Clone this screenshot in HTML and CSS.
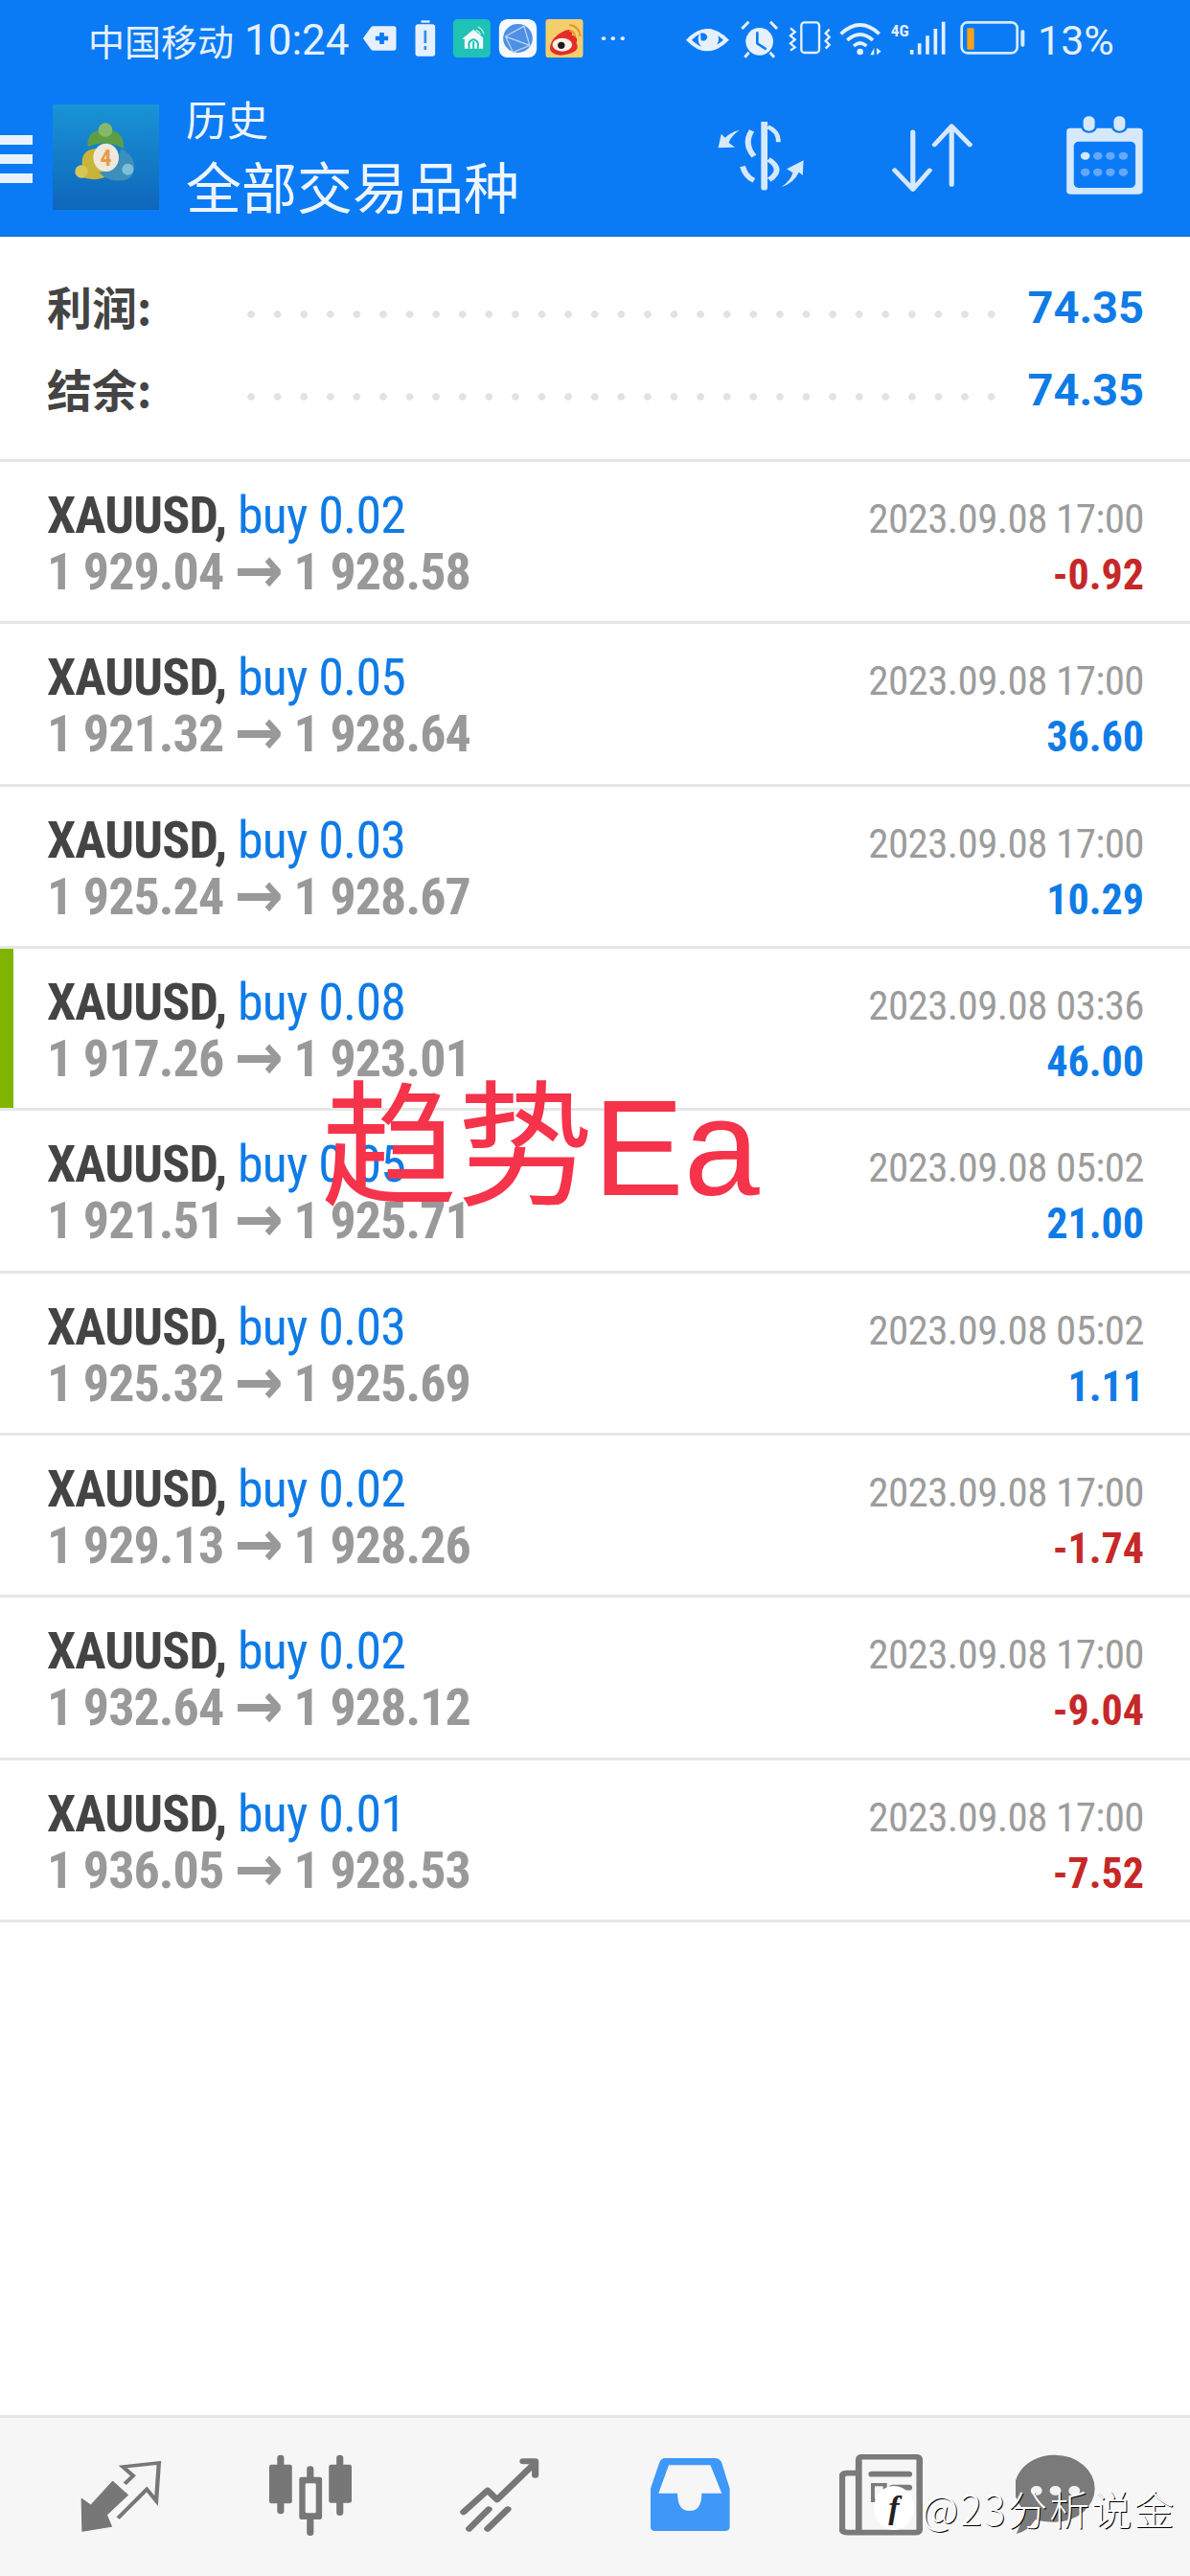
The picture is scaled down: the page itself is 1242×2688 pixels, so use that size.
FILE: index.html
```html
<!DOCTYPE html>
<html lang="zh">
<head>
<meta charset="utf-8">
<title>历史</title>
<link rel="stylesheet" href="styles.css">
</head>
<body>
<div class="screen">
<header class="header">
  <div class="status">
    <span class="carrier">中国移动</span>
    <span class="clock">10:24</span>
    <svg class="st-left" width="231" height="44" viewBox="24 24 692 132">
      <path d="M26 90 L52 54 Q54 52 58 52 H122 Q130 52 130 60 V120 Q130 128 122 128 H58 Q54 128 52 126Z" fill="#e6f0fc"/>
      <path d="M85 72 V108 M65 90 H105" stroke="#0a7bf5" stroke-width="14"/>
      <rect x="190" y="46" width="62" height="100" rx="9" fill="#e6f0fc"/>
      <rect x="208" y="34" width="27" height="7" fill="#e6f0fc"/>
      <path d="M221 65 V105 M221 114 V126" stroke="#2f8ff0" stroke-width="8"/>
      <rect x="308" y="30" width="117" height="120" rx="14" fill="#1fc2b4"/>
      <path d="M336 92 L372 62 L402 88 V122 H344 V92Z" fill="#f2fbfa"/>
      <path d="M358 122 V104 Q372 84 386 104 V122 M372 100 V122" fill="none" stroke="#1fc2b4" stroke-width="6"/>
      <path d="M386 54 Q400 60 404 76 M380 64 Q390 68 394 78" fill="none" stroke="#cfeeea" stroke-width="4"/>
      <rect x="452" y="30" width="118" height="120" rx="26" fill="#f6f9fe"/>
      <ellipse cx="511" cy="90" rx="46" ry="45" fill="#4f8fe4"/>
      <path d="M472 84 L530 52 L548 112 L496 134Z M472 84 L548 112" fill="none" stroke="#b8d3f4" stroke-width="4"/>
      <rect x="598" y="30" width="117" height="120" rx="10" fill="#f5ce6c"/>
      <path d="M612 118 Q615 85 660 65 Q685 58 680 80 Q702 84 694 104 Q706 124 680 136 Q640 150 620 136 Q610 128 612 118Z" fill="#e22d28"/>
      <ellipse cx="650" cy="110" rx="31" ry="21" fill="#fbf1e6"/>
      <circle cx="647" cy="112" r="11" fill="#1c1c1c"/>
      <path d="M672 48 Q704 52 706 84 M672 66 Q688 68 690 84" fill="none" stroke="#e9932f" stroke-width="6"/>
    </svg>
    <span class="more">···</span>
    <svg class="st-right" width="354" height="44" viewBox="45 24 1062 132">
      <path d="M45 95 Q110 25 180 95 Q110 165 45 95Z" fill="#e6f0fc"/>
      <path d="M63 95 Q110 48 162 95 Q110 142 63 95Z" fill="#0a7bf5"/>
      <circle cx="115" cy="92" r="32" fill="#e6f0fc"/>
      <path d="M90 74 Q108 70 112 86 Q106 102 92 96Z" fill="#0a7bf5"/>
      <circle cx="275" cy="100" r="43" fill="#e6f0fc"/>
      <path d="M220 60 L241 38 M330 60 L309 38 M242 134 L229 149 M308 134 L321 149" stroke="#e6f0fc" stroke-width="9"/>
      <path d="M268 70 V106 L296 124" fill="none" stroke="#0a7bf5" stroke-width="8"/>
      <rect x="406" y="40" width="56" height="95" rx="10" fill="none" stroke="#e6f0fc" stroke-width="7"/>
      <path d="M372 58 L386 70 L372 82 L386 94 L372 106 L386 118 L372 128 M494 62 L482 74 L494 86 L482 98 L494 110 L482 122" fill="none" stroke="#e6f0fc" stroke-width="7"/>
      <path d="M530 76 Q590 20 650 76 M550 96 Q590 60 630 96 M570 114 Q590 96 610 114" fill="none" stroke="#e6f0fc" stroke-width="11"/>
      <circle cx="590" cy="132" r="10" fill="#e6f0fc"/>
      <path d="M622 142 L634 120 V142Z M642 120 L656 131 L642 142Z" fill="#e6f0fc"/>
      <text x="686" y="84" class="st-4g">4G</text>
      <path d="M752 126 V140 M776 106 V140 M801 82 V140 M826 60 V140 M851 38 V140" stroke="#e6f0fc" stroke-width="11"/>
      <rect x="908" y="40" width="174" height="96" rx="18" fill="none" stroke="#d5eafc" stroke-width="8"/>
      <rect x="925" y="58" width="22" height="67" rx="4" fill="#f7a11a"/>
      <rect x="1093" y="64" width="12" height="52" rx="5" fill="#d5eafc"/>
    </svg>
    <span class="percent">13%</span>
  </div>
  <div class="toolbar">
    <div class="burger"><span></span><span></span><span></span></div>
    <svg class="logo" width="111" height="110" viewBox="15 12 333 330">
      <defs>
        <linearGradient id="lg" x1="0" y1="0" x2="0" y2="1"><stop offset="0" stop-color="#1a93d6"/><stop offset="1" stop-color="#0e66bb"/></linearGradient>
      </defs>
      <rect x="15" y="12" width="333" height="330" fill="url(#lg)"/>
      <path d="M125 145 Q120 102 160 92 L200 92 Q240 105 237 150 Q180 120 125 145Z" fill="#5d9e45"/>
      <path d="M150 150 Q100 155 108 205 L105 240 Q160 255 185 235 Q150 200 150 150Z" fill="#c9b43a"/>
      <path d="M230 150 Q275 175 270 215 Q265 250 225 250 Q190 255 160 225 Q210 220 230 150Z" fill="#3d8fbb"/>
      <circle cx="180" cy="92" r="22" fill="#86b86b"/>
      <circle cx="105" cy="222" r="20" fill="#d5c65a"/>
      <circle cx="250" cy="215" r="18" fill="#7cc0d8"/>
      <ellipse cx="182" cy="178" rx="40" ry="44" fill="#efe8dc"/>
      <text x="182" y="204" class="logo-4">4</text>
    </svg>
    <div class="titles">
      <div class="title-sm">历史</div>
      <div class="title-lg">全部交易品种</div>
    </div>
    <div class="actions">
      <svg width="93" height="72" viewBox="320 382 234 216" preserveAspectRatio="none">
        <g fill="none" stroke="#d6e8fc">
          <path d="M445 386 V588" stroke-width="17" stroke-linecap="round"/>
          <path d="M454 398 Q482 410 482 446" stroke-width="12"/>
          <path d="M412 410 Q390 450 418 490" stroke-width="15"/>
          <path d="M456 500 Q498 532 458 564" stroke-width="15"/>
          <path d="M388 522 Q396 555 418 566" stroke-width="15"/>
        </g>
        <path d="M380 408 Q355 430 352 448 L368 462 L324 464 L332 420 L342 432 Q358 414 380 408Z" fill="#d6e8fc"/>
        <path d="M490 586 Q515 566 520 542 L504 530 L548 503 L546 550 L536 540 Q522 575 490 586Z" fill="#d6e8fc"/>
      </svg>
      <svg width="88" height="74" viewBox="778 378 222 222" preserveAspectRatio="none">
        <path d="M838 410 V585 M790 530 L838 590 L882 530 M940 575 V392 M895 450 L940 392 L988 450" fill="none" stroke="#d6e8fc" stroke-width="13" stroke-linecap="round" stroke-linejoin="round"/>
      </svg>
      <svg class="cal" width="81" height="84" viewBox="1240 362 204 252" preserveAspectRatio="none">
        <rect x="1243" y="403" width="200" height="207" rx="10" fill="#d6e8fc"/>
        <rect x="1262" y="445" width="162" height="145" rx="14" fill="#0a7bf5"/>
        <rect x="1281" y="360" width="42" height="58" rx="20" fill="#0a7bf5"/>
        <rect x="1361" y="360" width="42" height="58" rx="20" fill="#0a7bf5"/>
        <rect x="1287" y="366" width="30" height="46" rx="15" fill="#d6e8fc"/>
        <rect x="1367" y="366" width="30" height="46" rx="15" fill="#d6e8fc"/>
        <g fill="#64a8f8">
          <circle cx="1292" cy="490" r="12" fill="#d6e8fc"/><circle cx="1325" cy="490" r="12"/><circle cx="1358" cy="490" r="12"/><circle cx="1392" cy="490" r="12"/>
          <circle cx="1292" cy="541" r="12"/><circle cx="1325" cy="541" r="12"/><circle cx="1358" cy="541" r="12"/><circle cx="1392" cy="541" r="12"/>
        </g>
      </svg>
    </div>
  </div>
</header>

<main class="content">
  <section class="summary">
    <div class="sum-row"><span class="sum-label">利润:</span><span class="dots"></span><span class="sum-value">74.35</span></div>
    <div class="sum-row"><span class="sum-label">结余:</span><span class="dots"></span><span class="sum-value">74.35</span></div>
  </section>
  <ul class="trades">
    <li class="trade"><div class="t-title">XAUUSD, <span class="buy">buy 0.02</span></div><div class="t-date">2023.09.08 17:00</div><div class="t-price">1 929.04 <span class="arrow">→</span> 1 928.58</div><div class="t-pl loss">-0.92</div></li>
    <li class="trade"><div class="t-title">XAUUSD, <span class="buy">buy 0.05</span></div><div class="t-date">2023.09.08 17:00</div><div class="t-price">1 921.32 <span class="arrow">→</span> 1 928.64</div><div class="t-pl gain">36.60</div></li>
    <li class="trade"><div class="t-title">XAUUSD, <span class="buy">buy 0.03</span></div><div class="t-date">2023.09.08 17:00</div><div class="t-price">1 925.24 <span class="arrow">→</span> 1 928.67</div><div class="t-pl gain">10.29</div></li>
    <li class="trade selected"><div class="t-title">XAUUSD, <span class="buy">buy 0.08</span></div><div class="t-date">2023.09.08 03:36</div><div class="t-price">1 917.26 <span class="arrow">→</span> 1 923.01</div><div class="t-pl gain">46.00</div></li>
    <li class="trade"><div class="t-title">XAUUSD, <span class="buy">buy 0.05</span></div><div class="t-date">2023.09.08 05:02</div><div class="t-price">1 921.51 <span class="arrow">→</span> 1 925.71</div><div class="t-pl gain">21.00</div></li>
    <li class="trade"><div class="t-title">XAUUSD, <span class="buy">buy 0.03</span></div><div class="t-date">2023.09.08 05:02</div><div class="t-price">1 925.32 <span class="arrow">→</span> 1 925.69</div><div class="t-pl gain">1.11</div></li>
    <li class="trade"><div class="t-title">XAUUSD, <span class="buy">buy 0.02</span></div><div class="t-date">2023.09.08 17:00</div><div class="t-price">1 929.13 <span class="arrow">→</span> 1 928.26</div><div class="t-pl loss">-1.74</div></li>
    <li class="trade"><div class="t-title">XAUUSD, <span class="buy">buy 0.02</span></div><div class="t-date">2023.09.08 17:00</div><div class="t-price">1 932.64 <span class="arrow">→</span> 1 928.12</div><div class="t-pl loss">-9.04</div></li>
    <li class="trade"><div class="t-title">XAUUSD, <span class="buy">buy 0.01</span></div><div class="t-date">2023.09.08 17:00</div><div class="t-price">1 936.05 <span class="arrow">→</span> 1 928.53</div><div class="t-pl loss">-7.52</div></li>
  </ul>
</main>

<nav class="tabbar">
  <svg class="tab tab-trade" width="85" height="75" viewBox="213 204 215 224" preserveAspectRatio="none">
    <path d="M298 268 L338 310 L282 372 L295 408 L218 423 L216 322 L240 342Z" fill="#777" stroke="#777" stroke-width="3" stroke-linejoin="round"/>
    <path d="M330 275 L352 250 L325 222 L420 210 L413 328 L388 292 L312 382" fill="none" stroke="#777" stroke-width="11"/>
  </svg>
  <svg class="tab tab-chart" width="88" height="86" viewBox="709 184 222 258" preserveAspectRatio="none">
    <g stroke="#777" stroke-width="18" stroke-linecap="round">
      <path d="M739 195 V362 M817 230 V430 M895 195 V367"/>
    </g>
    <rect x="709" y="216" width="60" height="122" rx="6" fill="#777"/>
    <rect x="788" y="255" width="60" height="133" rx="6" fill="#777"/>
    <rect x="804" y="275" width="28" height="93" rx="4" fill="#f6f6f6"/>
    <rect x="866" y="216" width="60" height="120" rx="6" fill="#777"/>
  </svg>
  <svg class="tab tab-line" width="86" height="78" viewBox="1210 195 216 234" preserveAspectRatio="none">
    <path d="M1222 364 L1285 296 L1310 325 L1405 215 M1378 205 H1410 V248 M1237 416 L1288 355 M1285 416 L1338 355" fill="none" stroke="#777" stroke-width="18" stroke-linecap="round" stroke-linejoin="round"/>
  </svg>
  <svg class="tab tab-inbox" width="83" height="78" viewBox="147 195 210 234" preserveAspectRatio="none">
    <path d="M185 195 H315 Q330 195 335 210 L356 290 V410 Q356 423 343 423 H160 Q147 423 147 410 V290 L170 210 Q175 195 185 195Z" fill="#3d98f7"/>
    <path d="M195 217 H305 L335 305 H282 Q282 360 250 360 Q218 360 218 305 H168Z" fill="#f6f6f6"/>
  </svg>
  <svg class="tab tab-news" width="87" height="85" viewBox="645 183 219 255" preserveAspectRatio="none">
    <path d="M690 242 H665 Q652 242 652 255 V415 Q652 428 668 428 H845 Q856 428 856 415 V202 Q856 191 845 191 H705 Q696 191 696 202 V420" fill="none" stroke="#7a7a7a" stroke-width="17"/>
    <path d="M730 245 H828 M785 287 H828" stroke="#7a7a7a" stroke-width="17" stroke-linecap="round"/>
    <rect x="733" y="278" width="32" height="50" fill="none" stroke="#7a7a7a" stroke-width="10"/>
  </svg>
  <svg class="tab tab-chat" width="83" height="85" viewBox="1108 183 210 255" preserveAspectRatio="none">
    <path d="M1212 185 A105 105 0 1 1 1212 395 Q1180 395 1160 388 Q1140 425 1110 432 Q1125 395 1132 360 A105 105 0 0 1 1212 185Z" fill="#7a7a7a"/>
    <circle cx="1163" cy="297" r="15" fill="#f2f2f2"/><circle cx="1213" cy="297" r="15" fill="#f2f2f2"/><circle cx="1263" cy="297" r="15" fill="#f2f2f2"/>
  </svg>
</nav>

<div class="stamp">趋势Ea</div>
<div class="watermark"><span class="wm-logo">f</span><span class="wm-text">@23分析说金</span></div>
</div>
</body>
</html>
```
FILE: styles.css
```css
* { box-sizing: border-box; margin: 0; padding: 0; }
html, body { width: 1242px; height: 2688px; overflow: hidden; background: #fff; }
body { font-family: Roboto, "Noto Sans CJK SC", sans-serif; }
.screen { position: relative; width: 1242px; height: 2688px; display: flex; flex-direction: column; }

.header { height: 247px; background: #0a7bf5; border-bottom: 1px solid #0a6fcf; color: #e6f0fc; flex: none; }
.status { height: 80px; padding-left: 92px; display: flex; align-items: center; }
.carrier { font: 400 38px "Noto Sans CJK SC", sans-serif; width: 153px; white-space: nowrap; position: relative; top: 1px; }
.clock { font-size: 44px; margin-left: 10px; width: 109px; white-space: nowrap; position: relative; top: 2px; }
.st-left { margin-left: 14px; }
.more { margin-left: 17px; font-size: 26px; font-weight: 700; width: 30px; letter-spacing: 2px; white-space: nowrap; }
.st-right { margin-left: 60px; }
.percent { font-size: 43px; margin-left: 13px; white-space: nowrap; position: relative; top: 2px; }
.st-4g { font: 700 52px Roboto, sans-serif; font-stretch: 75%; fill: #e6f0fc; }

.toolbar { height: 166px; display: flex; align-items: flex-start; }
.burger { width: 34px; margin-top: 61px; display: flex; flex-direction: column; gap: 10px; flex: none; }
.burger span { display: block; height: 10px; background: #e8f2fe; }
.logo { margin: 29px 0 0 21px; display: block; }
.logo-4 { font: 700 72px Roboto, sans-serif; font-stretch: 75%; fill: #e89a48; text-anchor: middle; }
.titles { margin: 20px 0 0 28px; color: #eef5fe; white-space: nowrap; }
.title-sm { font: 400 43px/46px "Noto Sans CJK SC", sans-serif; }
.title-lg { font: 400 58px/68px "Noto Sans CJK SC", sans-serif; margin-top: 13px; }
.actions { margin-left: auto; padding: 47px 49px 0 0; display: flex; align-items: flex-start; gap: 88px; }
.actions svg { display: block; }
.actions .cal { margin: -7px 0 0 7px; }

.content { flex: 1; }
.summary { height: 235px; padding-top: 30px; border-bottom: 3px solid #e6e6e6; }
.sum-row { height: 86px; padding: 0 48px 0 49px; display: flex; align-items: center; }
.sum-label { font: 700 47px "Noto Sans CJK SC", sans-serif; color: #444; width: 209px; white-space: nowrap; margin-top: -4px; }
.dots { flex: 1; height: 8px; margin: 16px 29px 0 0; background: radial-gradient(circle at 4px 4px, #e2e2e2 3.5px, transparent 4px) 0 0 / 27.6px 8px repeat-x; }
.sum-value { font-size: 47px; font-weight: 700; color: #0f7be6; width: 124px; text-align: right; white-space: nowrap; }

.trades { list-style: none; }
.trade { position: relative; height: 169.33px; padding: 26px 48px 0 49px; border-bottom: 3px solid #e6e6e6; display: grid; grid-template-columns: 1fr auto; grid-auto-rows: 59px; align-items: baseline; white-space: nowrap; }
.trade.selected::before { content: ""; position: absolute; left: 0; top: 0; bottom: 0; width: 14px; background: #7fb400; }
.t-title { font-size: 54px; line-height: 59px; font-weight: 700; font-stretch: 75%; letter-spacing: -0.85px; color: #444; }
.buy { font-weight: 400; color: #0f7be6; }
.t-price { font-size: 54px; line-height: 59px; font-weight: 700; font-stretch: 75%; letter-spacing: -0.95px; color: #999; }
.arrow { font-family: "DejaVu Sans", sans-serif; font-weight: 700; font-size: 68px; line-height: 0; vertical-align: -3px; }
.t-date { font-size: 43px; line-height: 59px; font-weight: 400; font-stretch: 75%; letter-spacing: -0.6px; color: #9c9c9c; text-align: right; }
.t-pl { font-size: 44px; line-height: 59px; font-weight: 700; font-stretch: 75%; text-align: right; }
.loss { color: #c62828; }
.gain { color: #0f7be6; }

.tabbar { height: 168px; flex: none; background: #f6f6f6; border-top: 3px solid #e6e6e6; display: flex; align-items: flex-start; }
.tab { display: block; flex: none; }
.tab-trade { margin: 45px 0 0 84px; }
.tab-chart { margin: 38px 0 0 112px; }
.tab-line { margin: 42px 0 0 110px; }
.tab-inbox { margin: 42px 0 0 114px; }
.tab-news { margin: 38px 0 0 114px; }
.tab-chat { margin: 38px 0 0 97px; }

.stamp { position: absolute; left: 335px; top: 1108px; font: 400 142px/180px "Liberation Sans", "Noto Sans CJK SC", sans-serif; color: #f5334a; white-space: nowrap; }
.watermark { position: absolute; left: 912px; top: 2592px; display: flex; align-items: center; color: #fff; }
.wm-logo { width: 42px; height: 46px; border-radius: 50%; background: #fff; color: #222; font: italic 700 34px/46px "Liberation Serif", serif; text-align: center; }
.wm-text { font: 300 42px/50px "Noto Sans CJK SC", sans-serif; margin-left: 8px; letter-spacing: 2px; text-shadow: 1px 1px 0 #000; white-space: nowrap; }
```
